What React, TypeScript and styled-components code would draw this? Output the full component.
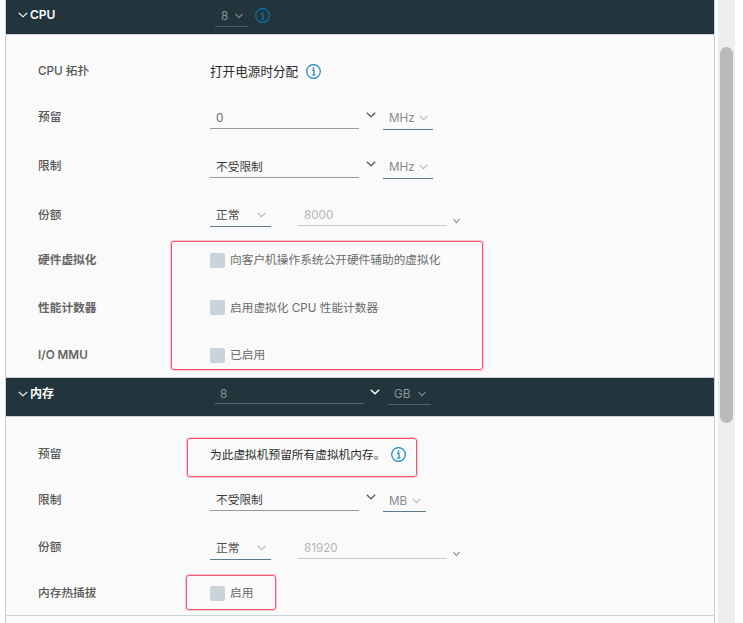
import React from "react";
import styled, { createGlobalStyle } from "styled-components";

const Global = createGlobalStyle`
  html, body { margin: 0; padding: 0; background: #fff; overflow: hidden; }
  body { font-family: Inter, "Noto Sans CJK SC", "Noto Sans", sans-serif; font-size: 11.7px; }
`;

const Page = styled.div`
  position: relative;
  width: 743px;
  height: 623px;
  display: flex;
  align-items: stretch;
  padding-left: 5px;
  box-sizing: border-box;
  overflow: hidden;
`;
const Panel = styled.div`
  width: 710px;
  box-sizing: border-box;
  border-left: 1px solid #c9d4da;
  border-right: 1px solid #c9d4da;
  background: #fafafa;
  display: flex;
  flex-direction: column;
`;
const Track = styled.div`
  width: 17px;
  margin-left: 3px;
  background: #eeeeee;
  padding: 47px 2px 0;
  box-sizing: border-box;
`;
const Thumb = styled.div`
  height: 376px;
  background: #bababa;
  border-radius: 7px;
`;
const Header = styled.div<{ $h: number; $top?: boolean }>`
  height: ${p => p.$h}px;
  box-sizing: border-box;
  background: #22343c;
  border-bottom: 1px solid #c9d4da;
  border-top: ${p => (p.$top ? "1px solid #c9d4da" : "none")};
  display: grid;
  grid-template-columns: 209px 1fr;
  align-items: start;
`;
const HeaderTitle = styled.div<{ $t: number }>`
  display: flex;
  align-items: center;
  gap: 2px;
  padding: ${p => p.$t}px 0 0 12px;
  color: #fff;
  font-size: 12px;
  font-weight: 600;
  line-height: 16px;
`;
const HeaderControls = styled.div<{ $t: number }>`
  display: flex;
  align-items: flex-start;
  padding-top: ${p => p.$t}px;
`;
const Body = styled.div<{ $pt: number }>`
  padding-top: ${p => p.$pt}px;
  display: flex;
  flex-direction: column;
`;
const Row = styled.div<{ $h: number }>`
  height: ${p => p.$h}px;
  display: grid;
  grid-template-columns: 172px 1fr;
  padding-left: 32px;
  align-items: center;
`;
const Label = styled.div<{ $bold?: boolean }>`
  color: ${p => (p.$bold ? "#666666" : "#565656")};
  font-size: 11.7px;
  font-weight: ${p => (p.$bold ? 600 : 500)};
  line-height: 16px;
`;
const Controls = styled.div`
  display: flex;
  align-items: flex-start;
`;
const Field = styled.div<{ $w: number; $disabled?: boolean; $dark?: boolean; $muted?: boolean }>`
  width: ${p => p.$w}px;
  height: 24px;
  box-sizing: border-box;
  padding-left: ${p => (p.$dark ? 5 : 6)}px;
  line-height: ${p => (p.$dark ? 28 : 26)}px;
  font-size: 11.7px;
  color: ${p => (p.$dark ? "#8b979d" : p.$disabled ? "#b5b5b5" : p.$muted ? "#6f6f6f" : "#3a3a3a")};
  border-bottom: 1px solid ${p => (p.$dark ? "#5b6b73" : p.$disabled ? "#c9c9c9" : "#9a9a9a")};
`;
const Detached = styled.div<{ $ml: number }>`
  margin-left: ${p => p.$ml}px;
`;
const UnitSelect = styled.div<{ $w: number; $ml: number; $dark?: boolean; $mid?: boolean }>`
  width: ${p => p.$w}px;
  margin-left: ${p => p.$ml}px;
  height: 25px;
  box-sizing: border-box;
  padding: ${p => (p.$mid ? 2 : 3)}px 5px 0 6px;
  display: flex;
  align-items: center;
  justify-content: space-between;
  font-size: 11.7px;
  color: ${p => (p.$dark ? "#8b979d" : p.$mid ? "#4f4f4f" : "#8a8a8a")};
  border-bottom: 1px solid ${p => (p.$dark ? "#4d5e66" : "#5f7a88")};
  line-height: 22px;
`;
const Chev = styled.svg<{ $color?: string; $w?: number; $sw?: number }>`
  width: ${p => p.$w ?? 9}px;
  height: 6px;
  flex: none;
  fill: none;
  stroke: ${p => p.$color ?? "#b3b3b3"};
  stroke-width: ${p => p.$sw ?? 1.1};
`;
const ChevronBox = styled.div<{ $ml: number; $mt: number }>`
  margin-left: ${p => p.$ml}px;
  margin-top: ${p => p.$mt}px;
  display: flex;
`;
const Plain = styled.div<{ $size?: number; $gap?: number }>`
  display: flex;
  align-items: center;
  font-size: ${p => p.$size ?? 11.7}px;
  color: #2b2b2b;
  line-height: 18px;
  gap: ${p => p.$gap ?? 8}px;
  position: relative;
  top: 1px;
`;
const CheckRow = styled.div`
  display: flex;
  align-items: center;
  gap: 5px;
  color: #6b6b6b;
  font-size: 11.7px;
  line-height: 16px;
`;
const Box = styled.div`
  width: 15px;
  height: 15px;
  border-radius: 2px;
  background: #c9d3da;
`;
const InfoSvg = styled.svg<{ $ml?: number; $mt?: number }>`
  width: 15px;
  height: 15px;
  flex: none;
  margin-left: ${p => p.$ml ?? 0}px;
  margin-top: ${p => p.$mt ?? 0}px;
`;
const Mark = styled.div<{ $l: number; $t: number; $w: number; $h: number }>`
  position: absolute;
  left: ${p => p.$l}px;
  top: ${p => p.$t}px;
  width: ${p => p.$w}px;
  height: ${p => p.$h}px;
  box-sizing: border-box;
  border: 1px solid #f2566f;
  box-shadow: 0 0 0 1px rgba(246, 124, 142, 0.4);
  border-radius: 3px;
  pointer-events: none;
`;
const Rule = styled.div`
  height: 1px;
  background: #c9d4da;
`;

const Chevron = ({ color, w, sw }: { color?: string; w?: number; sw?: number }) => (
  <Chev viewBox="0 0 9 6" preserveAspectRatio="none" $color={color} $w={w} $sw={sw}>
    <path d="M0.7 0.8 L4.5 4.8 L8.3 0.8" />
  </Chev>
);

const Info = ({ ml, mt, dark }: { ml?: number; mt?: number; dark?: boolean }) => (
  <InfoSvg viewBox="0 0 15 15" $ml={ml} $mt={mt}>
    <circle cx="7.5" cy="7.5" r="6.8" fill="none" stroke={dark ? "#0a76ad" : "#1a86bd"} strokeWidth="1.2" />
    <path
      d="M5.9 6.2 H8 V11 M5.7 11 H9.5 M7.5 3.2 V4.9"
      fill="none"
      stroke={dark ? "#0a76ad" : "#1a86bd"}
      strokeWidth="1.2"
    />
  </InfoSvg>
);

const MainChevron = ({ white }: { white?: boolean }) => (
  <ChevronBox $ml={white ? 6 : 7} $mt={white ? 9 : 7}>
    <Chevron color={white ? "#ffffff" : "#666"} w={10} sw={1.3} />
  </ChevronBox>
);

const SmallChevron = () => (
  <ChevronBox $ml={6} $mt={16}>
    <Chevron color="#777" w={7} />
  </ChevronBox>
);

const QuotaControls = ({ value }: { value: string }) => (
  <Controls>
    <UnitSelect $w={61} $ml={0} $mid>
      正常
      <Chevron />
    </UnitSelect>
    <Detached $ml={27}>
      <Field $w={149} $disabled>
        {value}
      </Field>
    </Detached>
    <SmallChevron />
  </Controls>
);

const LimitControls = ({
  value,
  unit,
  w,
  muted,
}: {
  value: string;
  unit: string;
  w: number;
  muted?: boolean;
}) => (
  <Controls>
    <Field $w={149} $muted={muted}>
      {value}
    </Field>
    <MainChevron />
    <UnitSelect $w={w} $ml={7}>
      {unit}
      <Chevron />
    </UnitSelect>
  </Controls>
);

export default function App() {
  return (
    <>
      <Global />
      <Page>
        <Panel>
          <Header $h={35}>
            <HeaderTitle $t={7}>
              <Chevron color="#fff" w={10} />
              CPU
            </HeaderTitle>
            <HeaderControls $t={2}>
              <UnitSelect $w={33} $ml={0} $dark>
                8
                <Chevron color="#8b979d" w={8} />
              </UnitSelect>
              <Info ml={7} mt={6} dark />
            </HeaderControls>
          </Header>
          <Body $pt={13}>
            <Row $h={45}>
              <Label>CPU 拓扑</Label>
              <Plain $size={12.6}>
                打开电源时分配
                <Info />
              </Plain>
            </Row>
            <Row $h={48}>
              <Label>预留</Label>
              <LimitControls value="0" unit="MHz" w={50} muted />
            </Row>
            <Row $h={50}>
              <Label>限制</Label>
              <LimitControls value="不受限制" unit="MHz" w={50} />
            </Row>
            <Row $h={47}>
              <Label>份额</Label>
              <QuotaControls value="8000" />
            </Row>
            <Row $h={44}>
              <Label $bold>硬件虚拟化</Label>
              <CheckRow>
                <Box />
                向客户机操作系统公开硬件辅助的虚拟化
              </CheckRow>
            </Row>
            <Row $h={51}>
              <Label $bold>性能计数器</Label>
              <CheckRow>
                <Box />
                启用虚拟化 CPU 性能计数器
              </CheckRow>
            </Row>
            <Row $h={44}>
              <Label $bold>I/O MMU</Label>
              <CheckRow>
                <Box />
                已启用
              </CheckRow>
            </Row>
          </Body>
          <Header $h={40} $top>
            <HeaderTitle $t={8}>
              <Chevron color="#fff" w={10} />
              内存
            </HeaderTitle>
            <HeaderControls $t={2}>
              <Field $w={149} $dark>
                8
              </Field>
              <MainChevron white />
              <UnitSelect $w={43} $ml={8} $dark>
                GB
                <Chevron color="#8b979d" w={8} />
              </UnitSelect>
            </HeaderControls>
          </Header>
          <Body $pt={14}>
            <Row $h={45}>
              <Label>预留</Label>
              <Plain $gap={6}>
                为此虚拟机预留所有虚拟机内存。
                <Info />
              </Plain>
            </Row>
            <Row $h={47}>
              <Label>限制</Label>
              <LimitControls value="不受限制" unit="MB" w={43} />
            </Row>
            <Row $h={48}>
              <Label>份额</Label>
              <QuotaControls value="81920" />
            </Row>
            <Row $h={44}>
              <Label>内存热插拔</Label>
              <CheckRow>
                <Box />
                启用
              </CheckRow>
            </Row>
          </Body>
          <Rule />
        </Panel>
        <Track>
          <Thumb />
        </Track>
        <Mark $l={171} $t={241} $w={312} $h={129} />
        <Mark $l={187} $t={438} $w={230} $h={39} />
        <Mark $l={186} $t={575} $w={90} $h={35} />
      </Page>
    </>
  );
}
